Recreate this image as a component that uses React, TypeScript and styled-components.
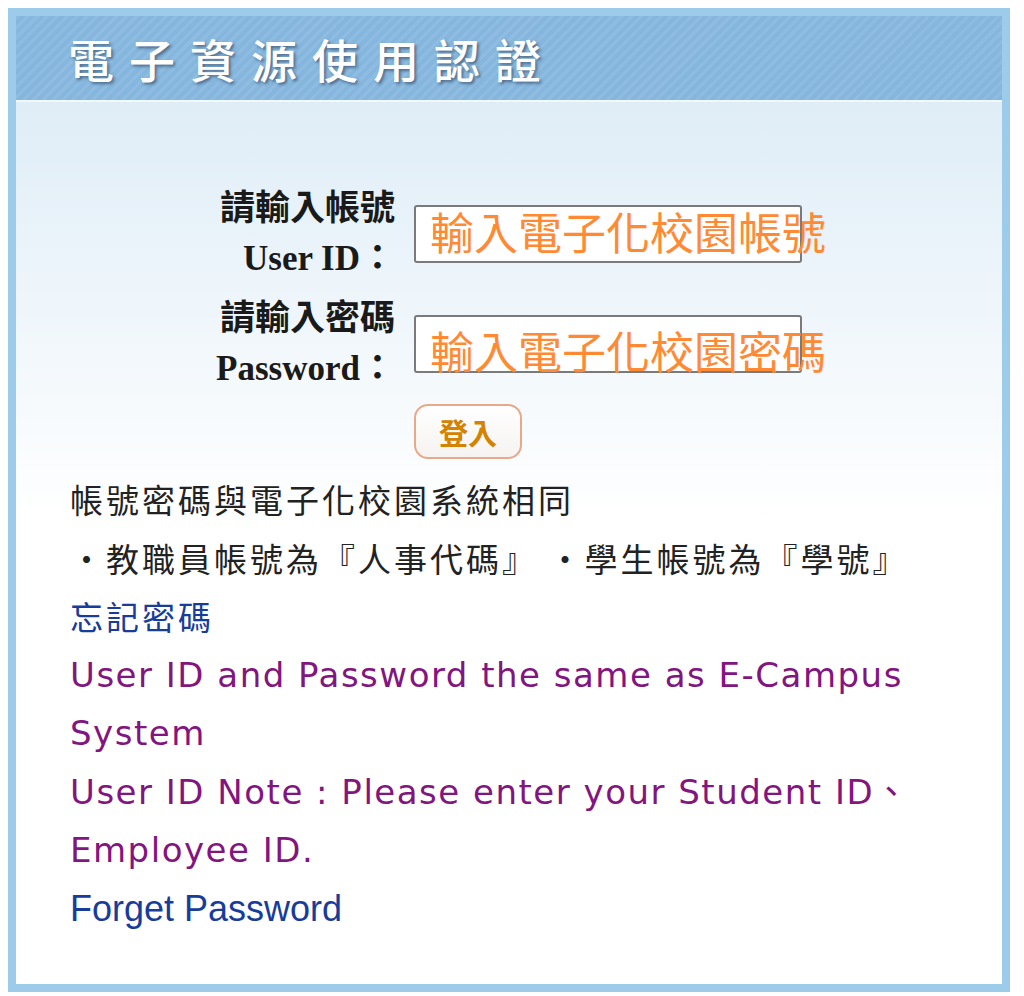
import React from 'react';
import styled, { createGlobalStyle } from 'styled-components';

const GlobalStyle = createGlobalStyle`
  html, body {
    margin: 0;
    padding: 0;
    background: #ffffff;
  }
  body {
    font-family: "DejaVu Sans", "Noto Sans CJK TC", sans-serif;
  }
`;

const Frame = styled.div`
  box-sizing: border-box;
  margin: 8px 0 0 8px;
  width: 1002px;
  height: 984px;
  border: 8px solid #9dcbea;
  display: flex;
  flex-direction: column;
  background: #ffffff;
`;

const Header = styled.div`
  height: 84px;
  flex-shrink: 0;
  display: flex;
  align-items: center;
  padding-left: 52px;
  background-color: #85b6dd;
  background-image: repeating-linear-gradient(
    135deg,
    rgba(255, 255, 255, 0.08) 0px,
    rgba(255, 255, 255, 0.08) 3px,
    rgba(255, 255, 255, 0) 3px,
    rgba(255, 255, 255, 0) 7px
  );
`;

const Title = styled.h1`
  margin: 0;
  font-family: "Noto Sans CJK TC", sans-serif;
  font-size: 46px;
  font-weight: 500;
  letter-spacing: 15px;
  color: #ffffff;
  text-shadow: 2px 2px 3px rgba(40, 60, 90, 0.6);
`;

const Content = styled.div`
  flex: 1;
  border-top: 2px solid #f2f8fc;
  background: linear-gradient(to bottom, #dfedf7 0px, #ffffff 420px);
  padding: 82px 0 0 54px;
`;

const Form = styled.form`
  display: grid;
  grid-template-columns: 328px 388px;
  column-gap: 16px;
  row-gap: 10px;
  align-items: center;
  margin: 0;
`;

const Label = styled.label`
  text-align: right;
  font-family: "Liberation Serif", "Noto Sans CJK TC", serif;
  font-size: 35px;
  font-weight: 700;
  line-height: 50px;
  color: #1a1a1a;
  margin-right: 3px;
`;

const Field = styled.div`
  position: relative;
  width: 388px;
  height: 58px;
`;

const Input = styled.input`
  box-sizing: border-box;
  width: 100%;
  height: 100%;
  border: 2px solid #7a7a7a;
  border-radius: 3px;
  background: #ffffff;
  outline: none;
`;

const Hint = styled.span<{ $offset: number }>`
  position: absolute;
  left: 16px;
  top: ${(p) => p.$offset}px;
  font-family: "Noto Sans CJK TC", sans-serif;
  font-size: 44px;
  line-height: 58px;
  white-space: nowrap;
  color: #ff8a33;
  pointer-events: none;
`;

const LoginButton = styled.button`
  grid-column: 2;
  justify-self: start;
  width: 108px;
  height: 55px;
  border: 2px solid #e8a98a;
  border-radius: 14px;
  background: linear-gradient(to bottom, #ffffff, #f6f3f1);
  color: #d38300;
  font-family: "Noto Sans CJK TC", sans-serif;
  font-size: 29px;
  font-weight: 700;
  cursor: pointer;
  padding: 0;
`;

const Notes = styled.div`
  margin-top: 11px;
`;

type Tone = 'text' | 'link' | 'en' | 'enlink';

const fontFor = (tone: Tone) => {
  if (tone === 'enlink') return '"Liberation Sans", "Noto Sans CJK TC", sans-serif';
  if (tone === 'en') return '"DejaVu Sans", "Noto Sans CJK TC", sans-serif';
  return '"Noto Sans CJK TC", sans-serif';
};

const Line = styled.div<{ $tone: Tone }>`
  line-height: 58.5px;
  white-space: pre;
  font-family: ${(p) => fontFor(p.$tone)};
  font-size: ${(p) => (p.$tone === 'enlink' ? '36px' : p.$tone === 'en' ? '34px' : '33px')};
  letter-spacing: ${(p) => (p.$tone === 'en' ? '1.5px' : p.$tone === 'enlink' ? '0' : '3px')};
  color: ${(p) =>
    p.$tone === 'text'
      ? '#222222'
      : p.$tone === 'en'
      ? '#82157f'
      : '#173c9a'};
`;

function App() {
  return (
    <>
      <GlobalStyle />
      <Frame>
        <Header>
          <Title>電子資源使用認證</Title>
        </Header>
        <Content>
          <Form onSubmit={(e) => e.preventDefault()}>
            <Label htmlFor="uid">
              請輸入帳號
              <br />
              User ID：
            </Label>
            <Field>
              <Input id="uid" type="text" />
              <Hint $offset={-3}>輸入電子化校園帳號</Hint>
            </Field>
            <Label htmlFor="pwd">
              請輸入密碼
              <br />
              Password：
            </Label>
            <Field>
              <Input id="pwd" type="password" />
              <Hint $offset={6}>輸入電子化校園密碼</Hint>
            </Field>
            <LoginButton type="submit">登入</LoginButton>
          </Form>
          <Notes>
            <Line $tone="text">帳號密碼與電子化校園系統相同</Line>
            <Line $tone="text">{'‧教職員帳號為『人事代碼』 ‧學生帳號為『學號』'}</Line>
            <Line $tone="link">忘記密碼</Line>
            <Line $tone="en">User ID and Password the same as E-Campus</Line>
            <Line $tone="en">System</Line>
            <Line $tone="en">User ID Note : Please enter your Student ID、</Line>
            <Line $tone="en">Employee ID.</Line>
            <Line $tone="enlink">Forget Password</Line>
          </Notes>
        </Content>
      </Frame>
    </>
  );
}

export default App;
